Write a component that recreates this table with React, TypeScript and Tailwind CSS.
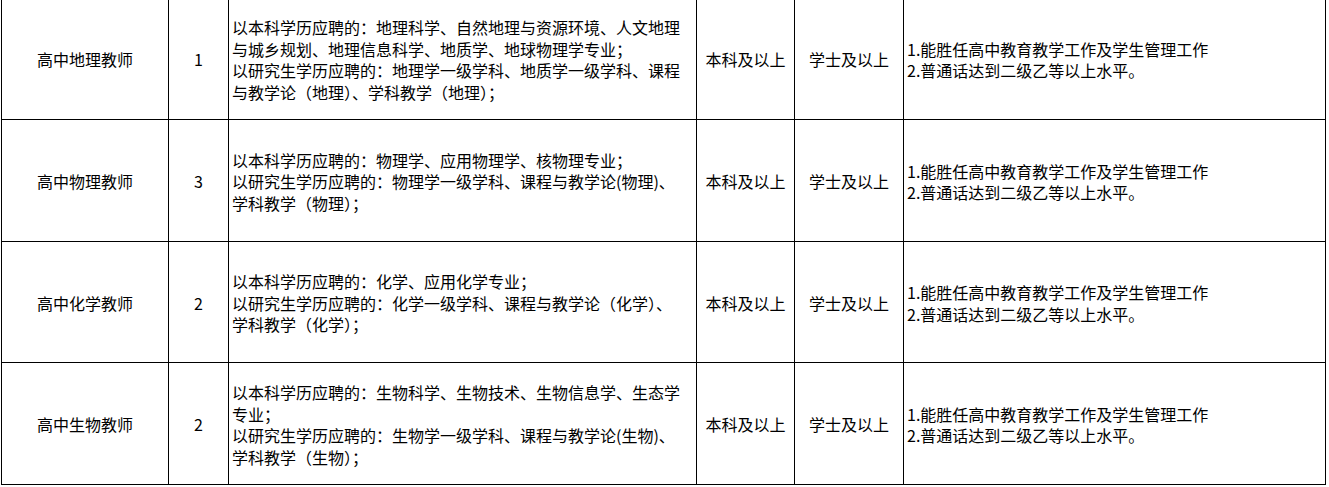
import React from "react";

type Row = {
  title: string;
  count: string;
  major: string[];
  h: string;
};

const rows: Row[] = [
  {
    title: "高中地理教师",
    count: "1",
    major: [
      "以本科学历应聘的：地理科学、自然地理与资源环境、人文地理",
      "与城乡规划、地理信息科学、地质学、地球物理学专业；",
      "以研究生学历应聘的：地理学一级学科、地质学一级学科、课程",
      "与教学论（地理）、学科教学（地理）；",
    ],
    h: "h-[122px]",
  },
  {
    title: "高中物理教师",
    count: "3",
    major: [
      "以本科学历应聘的：物理学、应用物理学、核物理专业；",
      "以研究生学历应聘的：物理学一级学科、课程与教学论(物理)、",
      "学科教学（物理）；",
    ],
    h: "h-[122px]",
  },
  {
    title: "高中化学教师",
    count: "2",
    major: [
      "以本科学历应聘的：化学、应用化学专业；",
      "以研究生学历应聘的：化学一级学科、课程与教学论（化学）、",
      "学科教学（化学）；",
    ],
    h: "h-[121px]",
  },
  {
    title: "高中生物教师",
    count: "2",
    major: [
      "以本科学历应聘的：生物科学、生物技术、生物信息学、生态学",
      "专业；",
      "以研究生学历应聘的：生物学一级学科、课程与教学论(生物)、",
      "学科教学（生物）；",
    ],
    h: "h-[122px]",
  },
];

export default function App() {
  return (
    <div
      className="w-[1329px] h-[487px] overflow-hidden bg-white text-black"
      style={{ fontFamily: '"Noto Sans CJK SC", "Noto Sans", sans-serif' }}
    >
      <div className="-mt-[2px] ml-[1px] w-[1325px] text-[16px] leading-[21.5px]">
        {rows.map((r, i) => (
          <div key={i} className={`flex ${r.h} border-b border-black`}>
            <div className="w-[168px] shrink-0 border-l border-r border-black flex items-center justify-center pt-[3px]">
              {r.title}
            </div>
            <div className="w-[60px] shrink-0 border-r border-black flex items-center justify-center pt-[3px]">
              {r.count}
            </div>
            <div className="w-[468px] shrink-0 border-r border-black flex items-center pl-[3px] pt-[3px]">
              <div className="whitespace-nowrap">
                {r.major.map((m, j) => (
                  <div key={j}>{m}</div>
                ))}
              </div>
            </div>
            <div className="w-[98px] shrink-0 border-r border-black flex items-center justify-center pt-[3px]">
              本科及以上
            </div>
            <div className="w-[109px] shrink-0 border-r border-black flex items-center justify-center pt-[3px]">
              学士及以上
            </div>
            <div className="w-[422px] shrink-0 border-r border-black flex items-center pl-[3px] pt-[3px]">
              <div className="whitespace-nowrap">
                <div>1.能胜任高中教育教学工作及学生管理工作</div>
                <div>2.普通话达到二级乙等以上水平。</div>
              </div>
            </div>
          </div>
        ))}
      </div>
    </div>
  );
}
